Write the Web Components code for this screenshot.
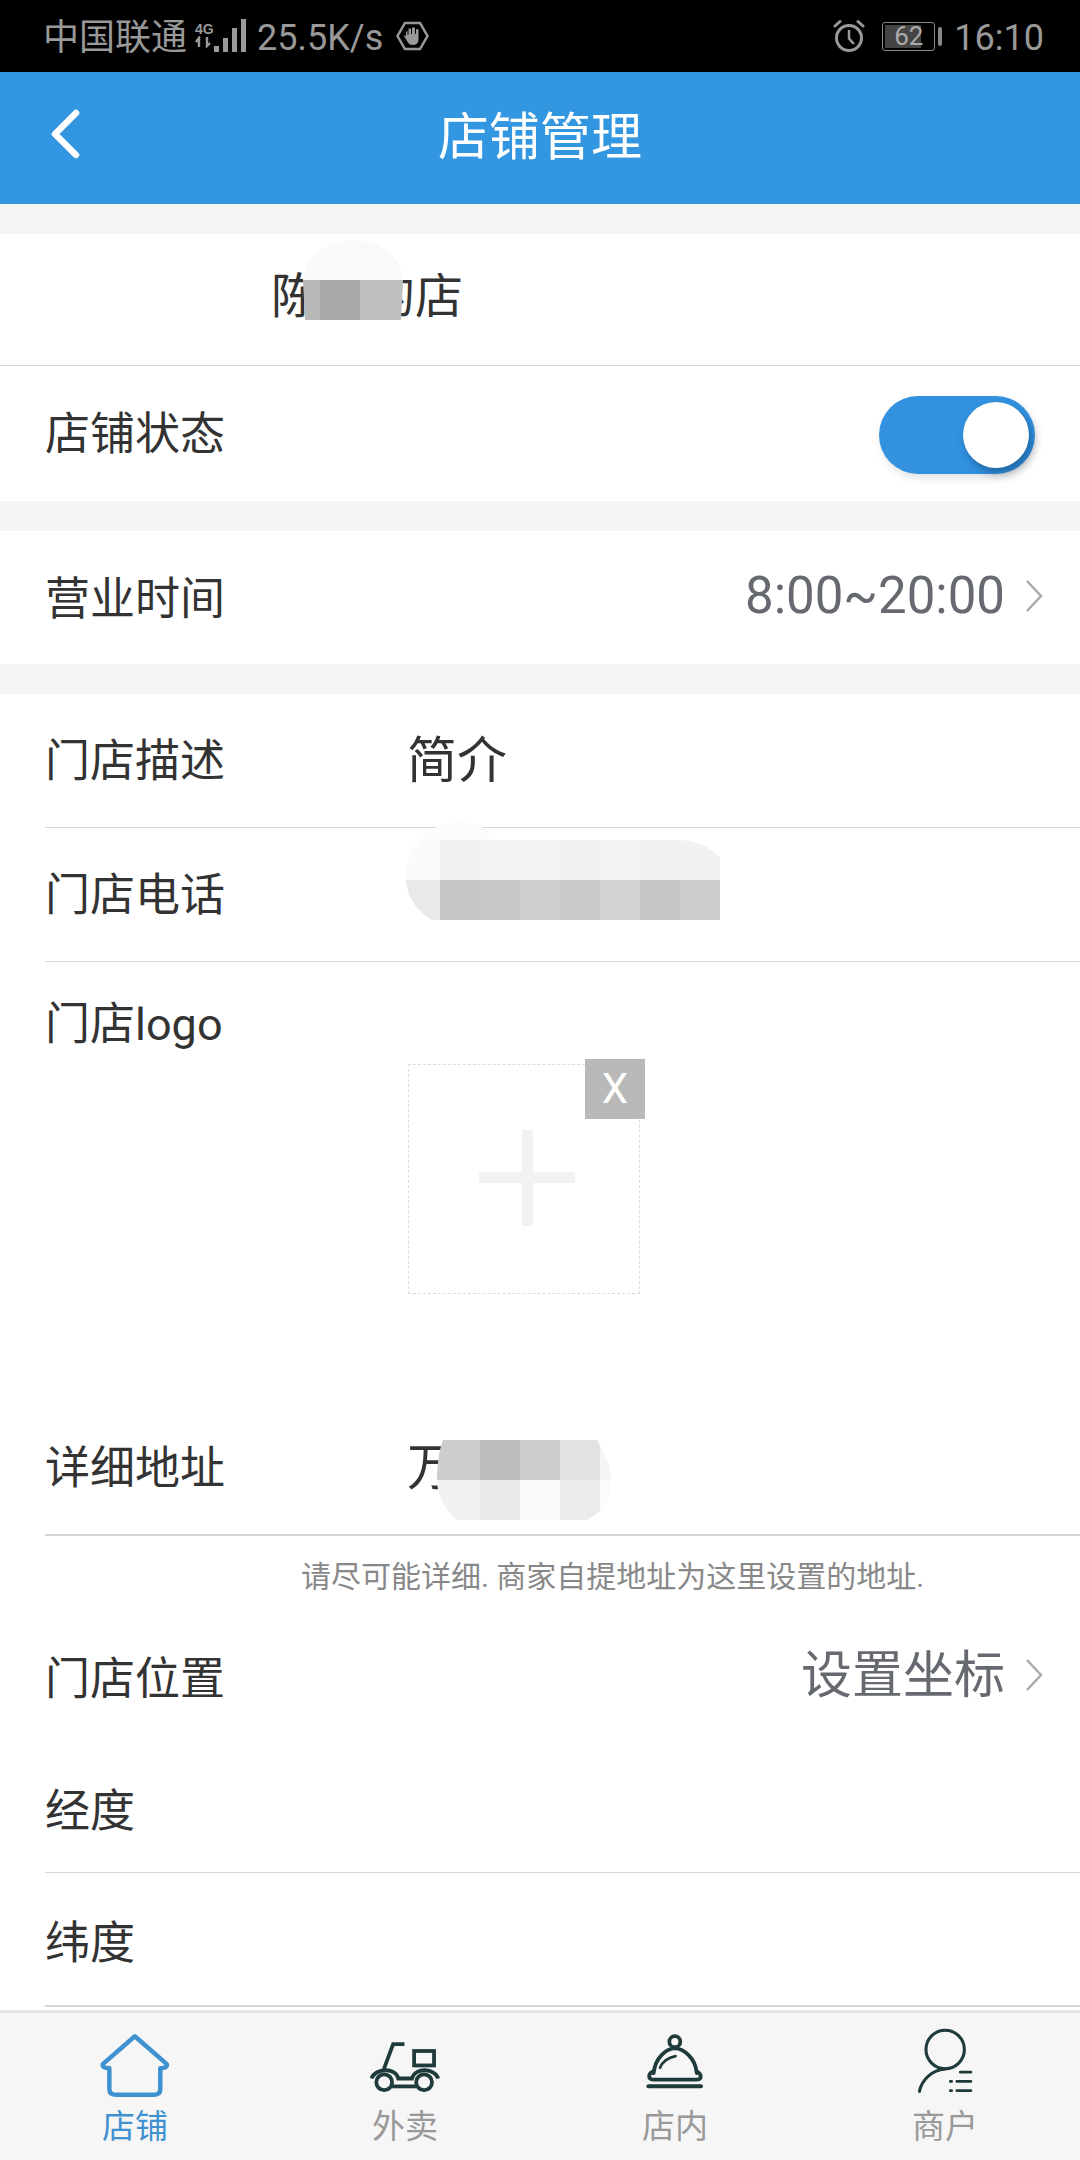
<!DOCTYPE html>
<html lang="zh-CN">
<head>
<meta charset="utf-8">
<title>店铺管理</title>
<style>
    html,body{margin:0;padding:0;background:#fff;}
    body{font-family:Roboto,"Noto Sans CJK SC",sans-serif;}
</style>
</head>
<body>
<store-app>
    <status-bar></status-bar>
    <app-header title="店铺管理"></app-header>
    <section-gap></section-gap>

    <form-row height="132" line="full" indent="271"><span slot="value" class="name">陈　的店</span></form-row>
    <form-row height="135" label="店铺状态" style="--label-nudge:2px;--right-nudge:-2px"><toggle-switch slot="right"></toggle-switch></form-row>
    <section-gap></section-gap>

    <form-row height="133" label="营业时间" value-right="8:00~20:00" arrow style="--label-nudge:4px;--right-nudge:4px"></form-row>
    <section-gap></section-gap>

    <form-row height="134" line="inset" label="门店描述" indent="407" value="简介"></form-row>
    <form-row height="134" line="inset" label="门店电话" indent="407"></form-row>
    <form-row height="439" align="top" label="门店logo" indent="408"><upload-box slot="value"></upload-box></form-row>
    <form-row height="134" line="inset" label="详细地址" indent="407" value="万"></form-row>
    <form-tip>请尽可能详细. 商家自提地址为这里设置的地址.</form-tip>
    <form-row height="132" label="门店位置" value-right="设置坐标" arrow style="--label-nudge:8px"></form-row>
    <form-row height="132" line="inset" label="经度" style="--label-nudge:8px"></form-row>
    <form-row height="133" line="inset" label="纬度" style="--label-nudge:8px"></form-row>

    <blur-patch style="left:303px;top:240px;width:100px;height:80px;clip-path:path('M0 40C0 15 25 0 50 0C75 0 100 15 100 42L98 80L2 80Z')"
        cols="17 40 40 3" rows="40 40"
        colors="#fafafa #fafafa #f9f9f9 #f9f9f9 #b9b9b9 #a9a9a9 #bfbfbf #bfbfbf"></blur-patch>
    <blur-patch style="left:406px;top:822px;width:314px;height:98px;clip-path:path('M0 55C0 20 30 0 50 0C70 0 85 8 92 18L270 18C290 18 305 25 314 36L314 98L26 98C12 90 0 75 0 55Z')"
        cols="34 40 40 40 40 40 40 40" rows="18 40 40"
        colors="#fcfcfc #fcfcfc #fcfcfc #fcfcfc #fcfcfc #fcfcfc #fcfcfc #fcfcfc #fafafa #f0f0f0 #f3f3f3 #f3f3f3 #f1f1f1 #f3f3f3 #f1f1f1 #f1f1f1 #e9e9e9 #c4c5c6 #c8c8c8 #cdced0 #cbcbcb #d3d3d3 #c5c6c7 #cbcdcb"></blur-patch>
    <blur-patch style="left:437px;top:1440px;width:174px;height:80px;clip-path:path('M6 0L160 0C168 15 174 25 174 40C174 60 165 72 150 80L20 80C8 70 0 55 0 40C0 25 2 10 6 0Z')"
        cols="3 40 40 40 40 11" rows="40 40"
        colors="#cdcdcd #cdcdcd #bbbcbd #cbcccb #e2e2e2 #f5f5f5 #f1f1f1 #f1f1f1 #e9eaea #f9f9f9 #ececec #fbfbfb"></blur-patch>

    <tab-bar slot="tabs">
        <tab-item label="店铺" active>
            <svg viewBox="285 100 215 200" width="74" height="69" fill="none" stroke="#3f92cf" stroke-width="13" stroke-linejoin="round" stroke-linecap="round">
                <path d="M392 115L299 196Q296 207 318 208V268Q318 285 338 285H446Q466 285 466 268V208Q488 207 485 196Z"/>
            </svg>
        </tab-item>
        <tab-item label="外卖" style="--icon-lift:5px">
            <svg viewBox="1070 120 215 160" width="74" height="55" fill="none" stroke="#1e3a3a" stroke-width="11">
                <path d="M1176 132H1143L1116 205"/>
                <rect x="1204" y="152" width="58" height="42"/>
                <path d="M1080 232C1090 202 1150 198 1158 232H1198C1206 198 1266 202 1274 232"/>
                <circle cx="1117" cy="243" r="23"/>
                <circle cx="1233" cy="243" r="23"/>
                <path d="M1140 255H1210"/>
            </svg>
        </tab-item>
        <tab-item label="店内" style="--icon-lift:9px">
            <svg viewBox="300 95 185 175" width="64" height="60" fill="none" stroke="#1e3a3a" stroke-width="11" stroke-linecap="round">
                <circle cx="392" cy="126" r="16"/>
                <path d="M330 218C335 172 368 146 392 146C416 146 452 172 456 218"/>
                <path d="M326 214Q314 222 318 232Q322 237 330 237H456Q464 237 467 232Q470 222 458 214"/>
                <path d="M315 256H468" stroke-width="12"/>
                <path d="M349 202C354 186 372 172 394 168" stroke-width="8"/>
            </svg>
        </tab-item>
        <tab-item label="商户" style="--icon-lift:5px">
            <svg viewBox="1090 80 175 200" width="60" height="69" fill="none" stroke="#1e3a3a" stroke-width="9" stroke-linecap="round">
                <circle cx="1178" cy="148" r="56"/>
                <path d="M1103 270C1110 235 1140 208 1178 205"/>
                <path d="M1222 214H1253M1193 241H1197M1212 241H1253M1193 268H1197M1212 268H1253" stroke-width="8"/>
            </svg>
        </tab-item>
    </tab-bar>
</store-app>

<script>
class StoreApp extends HTMLElement{
    constructor(){
        super()
        this.attachShadow({mode:"open"});
        this.shadowRoot.append(StoreApp.template.content.cloneNode(true))
    }
}
StoreApp.template = document.createElement("template")
StoreApp.template.innerHTML = `
    <style>
        :host{
            display:flex;
            flex-direction:column;
            position:relative;
            width:1080px;
            height:2160px;
            overflow:hidden;
            background:#fff;
            color:#333;
        }
        main{flex:1;min-height:0;}
    </style>
    <main><slot></slot></main>
    <slot name="tabs"></slot>
`
customElements.define("store-app", StoreApp);

class StatusBar extends HTMLElement{
    constructor(){
        super()
        this.attachShadow({mode:"open"});
        this.shadowRoot.append(StatusBar.template.content.cloneNode(true))
    }
}
StatusBar.template = document.createElement("template")
StatusBar.template.innerHTML = `
    <style>
        :host{
            display:flex;
            align-items:center;
            height:72px;
            padding:4px 36px 0 43px;
            box-sizing:border-box;
            background:#000;
            color:#999;
            font-size:36px;
            line-height:68px;
        }
        .net{display:flex;flex-direction:column;width:18px;margin-left:8px;margin-top:-6px;font:700 14px/14px "Liberation Sans",sans-serif;}
        .net svg{display:block;}
        .bars{margin:-4px 10px 0 1px;}
        .hand{margin-left:13px;margin-top:-4px;}
        .spacer{flex:1;}
        .alarm{margin:-4px 0 0 0;}
        .battery{
            position:relative;
            width:53px;
            height:29px;
            box-sizing:border-box;
            margin:-4px 3px 0 17px;
            border:1.5px solid #888;
            border-radius:3px;
            font-size:26px;
            line-height:26px;
            text-align:center;
            color:#aaa;
        }
        .battery i{position:absolute;left:2px;top:2px;bottom:2px;width:36px;background:#444;}
        .battery span{position:relative;}
        .nub{width:4px;height:19px;margin:-4px 12px 0 0;border-radius:2px;background:#888;}
    </style>
    <span>中国联通</span>
    <div class="net"><span>4G</span>
        <svg width="18" height="12" viewBox="0 0 18 12" fill="none" stroke="#999" stroke-width="2.4">
            <path d="M4 11V2L1 6M12 1V10L15 7"/>
        </svg>
    </div>
    <svg class="bars" width="33" height="36" viewBox="0 0 33 36" fill="#999">
        <rect x="0" y="28" width="5" height="6"/>
        <rect x="9" y="20" width="5" height="14"/>
        <rect x="18" y="10" width="5" height="24"/>
        <rect x="27" y="1" width="5" height="33"/>
    </svg>
    <span>25.5K/s</span>
    <svg class="hand" width="33" height="30" viewBox="0 0 33 30">
        <path d="M9 2H24L31.500 15L24 28H9L1.500 15Z" fill="none" stroke="#999" stroke-width="2.500"/>
        <path d="M10 12Q10 10 11.500 10V14H12.500V8Q14 6.500 15 8V13H16V7Q17.500 5.500 19 7V13H20V8.500Q21.500 7.500 22.500 9V18Q22.500 24 16.500 24Q12.500 24 10.500 19L8 15Q9 13.500 10 15Z" fill="#999"/>
    </svg>
    <div class="spacer"></div>
    <svg class="alarm" width="32" height="34" viewBox="0 0 32 34" fill="none" stroke="#999" stroke-width="3">
        <circle cx="16" cy="19" r="12.500"/>
        <path d="M16 11V19.500L21 25" stroke-width="2.500"/>
        <path d="M2 7L7 2.500M30 7L25 2.500" stroke-linecap="round"/>
    </svg>
    <div class="battery"><i></i><span>62</span></div>
    <div class="nub"></div>
    <span>16:10</span>
`
customElements.define("status-bar", StatusBar);

class AppHeader extends HTMLElement{
    constructor(){
        super()
        this.attachShadow({mode:"open"});
        this.shadowRoot.append(AppHeader.template.content.cloneNode(true))
        this.shadowRoot.querySelector("h1").textContent = this.getAttribute("title");
    }
}
AppHeader.template = document.createElement("template")
AppHeader.template.innerHTML = `
    <style>
        :host{
            display:grid;
            grid-template-columns:1fr auto 1fr;
            align-items:center;
            height:132px;
            padding-left:50px;
            box-sizing:border-box;
            background:#3296e0;
            color:#fff;
        }
        h1{margin:0 0 0 -50px;font-size:51px;font-weight:400;line-height:130px;}
        svg{margin-bottom:8px;}
    </style>
    <svg width="30" height="50" viewBox="0 0 30 50" fill="none" stroke="#fff" stroke-width="6.500" stroke-linecap="round" stroke-linejoin="round">
        <path d="M26 4L5 25L26 46"/>
    </svg>
    <h1></h1>
`
customElements.define("app-header", AppHeader);

class SectionGap extends HTMLElement{
    constructor(){
        super()
        this.attachShadow({mode:"open"});
        this.shadowRoot.innerHTML = `<style>:host{display:block;height:30px;background:#f5f5f5;}</style>`
    }
}
customElements.define("section-gap", SectionGap);

class FormRow extends HTMLElement{
    constructor(){
        super()
        this.attachShadow({mode:"open"});
        this.shadowRoot.append(FormRow.template.content.cloneNode(true))
    }
    connectedCallback(){
        let root = this.shadowRoot;
        this.style.setProperty("--row-height", this.getAttribute("height")+"px");
        root.querySelector(".label").textContent = this.getAttribute("label") || "";
        let indent = this.getAttribute("indent");
        if (indent) root.querySelector(".value").style.left = indent+"px";
        root.querySelector(".value").prepend(this.getAttribute("value") || "");
        root.querySelector(".right-text").textContent = this.getAttribute("value-right") || "";
        if (this.hasAttribute("arrow")) root.querySelector(".arrow").style.display = "block";
    }
}
FormRow.template = document.createElement("template")
FormRow.template.innerHTML = `
    <style>
        :host{
            display:block;
            position:relative;
            height:var(--row-height);
            box-sizing:border-box;
            background:#fff;
        }
        .inner{
            display:flex;
            align-items:center;
            height:100%;
            padding:0 37px 0 45px;
            box-sizing:border-box;
        }
        :host([align="top"]) .inner{align-items:flex-start;padding-top:28px;}
        :host([align="top"]) .label{line-height:70px;}
        .label{font-size:45px;line-height:1;color:#333;white-space:nowrap;margin-top:var(--label-nudge,0);}
        .value{position:absolute;top:0;font-size:50px;color:#333;line-height:var(--row-height);}
        :host([align="top"]) .value{line-height:normal;top:0;}
        .right{margin-left:auto;display:flex;align-items:center;margin-bottom:var(--right-nudge,0);}
        .right-text{font-size:51px;color:#666a70;line-height:1;}
        .arrow{display:none;margin-left:20px;}
        :host([line])::after{
            content:"";
            position:absolute;
            left:0;right:0;bottom:-1px;
            height:2px;
            background:#d6d6d6;
        }
        :host([line="inset"])::after{left:45px;}
        ::slotted(.name){font-size:48px;line-height:126px;display:block;}
    </style>
    <div class="inner">
        <span class="label"></span>
        <span class="value"><slot name="value"></slot></span>
        <div class="right">
            <slot name="right"></slot>
            <span class="right-text"></span>
            <svg class="arrow" width="18" height="34" viewBox="0 0 18 34" fill="none" stroke="#aaa" stroke-width="2.500">
                <path d="M2 2L16 17L2 32"/>
            </svg>
        </div>
    </div>
`
customElements.define("form-row", FormRow);

class FormTip extends HTMLElement{
    constructor(){
        super()
        this.attachShadow({mode:"open"});
        this.shadowRoot.innerHTML = `
            <style>
                :host{
                    display:block;
                    height:74px;
                    padding-top:20px;
                    padding-left:301px;
                    box-sizing:border-box;
                    font-size:30px;
                    line-height:44px;
                    color:#888;
                    white-space:nowrap;
                }
            </style>
            <slot></slot>
        `
    }
}
customElements.define("form-tip", FormTip);

class ToggleSwitch extends HTMLElement{
    constructor(){
        super()
        this.attachShadow({mode:"open"});
        this.shadowRoot.innerHTML = `
            <style>
                :host{
                    display:block;
                    position:relative;
                    width:156px;
                    height:78px;
                    margin-right:8px;
                    border-radius:39px;
                    background:#3292e0;
                    box-shadow:2px 4px 8px rgba(0,0,0,.12);
                }
                i{
                    position:absolute;
                    right:6px;top:6px;
                    width:66px;height:66px;
                    border-radius:50%;
                    background:#fff;
                    box-shadow:3px 5px 9px rgba(0,30,60,.38);
                }
            </style>
            <i></i>
        `
    }
}
customElements.define("toggle-switch", ToggleSwitch);

class UploadBox extends HTMLElement{
    constructor(){
        super()
        this.attachShadow({mode:"open"});
        this.shadowRoot.innerHTML = `
            <style>
                :host{
                    display:grid;
                    place-items:center;
                    position:absolute;
                    left:0;
                    top:102px;
                    width:232px;
                    height:230px;
                    box-sizing:border-box;
                    border:1.500px dashed #ddd;
                }
                .plus{width:96px;height:96px;margin:0 0 3px 6px;
                    background:
                        linear-gradient(#f2f2f2,#f2f2f2) center/96px 11px no-repeat,
                        linear-gradient(#f2f2f2,#f2f2f2) center/11px 96px no-repeat;
                }
                .close{
                    position:absolute;
                    right:-6px;top:-6px;
                    width:60px;height:60px;
                    background:#b9b9b9;
                    color:#fff;
                    font-size:42px;
                    line-height:60px;
                    text-align:center;
                }
            </style>
            <div class="plus"></div>
            <div class="close">X</div>
        `
    }
}
customElements.define("upload-box", UploadBox);

class BlurPatch extends HTMLElement{
    constructor(){
        super()
        this.attachShadow({mode:"open"});
        let cols = this.getAttribute("cols").split(" ").map(n=>n+"px").join(" ");
        let rows = this.getAttribute("rows").split(" ").map(n=>n+"px").join(" ");
        let cells = this.getAttribute("colors").split(" ").map(c=>`<i style="background:${c}"></i>`).join("");
        this.shadowRoot.innerHTML = `
            <style>
                :host{position:absolute;display:grid;grid-template-columns:${cols};grid-template-rows:${rows};}
            </style>
            ${cells}
        `
    }
}
customElements.define("blur-patch", BlurPatch);

class TabBar extends HTMLElement{
    constructor(){
        super()
        this.attachShadow({mode:"open"});
        this.shadowRoot.innerHTML = `
            <style>
                :host{
                    display:grid;
                    grid-template-columns:repeat(4,1fr);
                    height:150px;
                    box-sizing:border-box;
                    border-top:3px solid #e4e4e4;
                    background:#f6f6f7;
                }
            </style>
            <slot></slot>
        `
    }
}
customElements.define("tab-bar", TabBar);

class TabItem extends HTMLElement{
    constructor(){
        super()
        this.attachShadow({mode:"open"});
        this.shadowRoot.append(TabItem.template.content.cloneNode(true))
        this.shadowRoot.querySelector("span").textContent = this.getAttribute("label");
    }
}
TabItem.template = document.createElement("template")
TabItem.template.innerHTML = `
    <style>
        :host{
            display:flex;
            flex-direction:column;
            align-items:center;
            color:#999;
            font-size:33px;
        }
        :host([active]){color:#3f92cf;}
        .icon{display:flex;align-items:flex-end;justify-content:center;height:87px;}
        ::slotted(svg){margin-bottom:var(--icon-lift,0);}
        span{line-height:44px;margin-top:5px;}
    </style>
    <div class="icon"><slot></slot></div>
    <span></span>
`
customElements.define("tab-item", TabItem);
</script>
</body>
</html>
